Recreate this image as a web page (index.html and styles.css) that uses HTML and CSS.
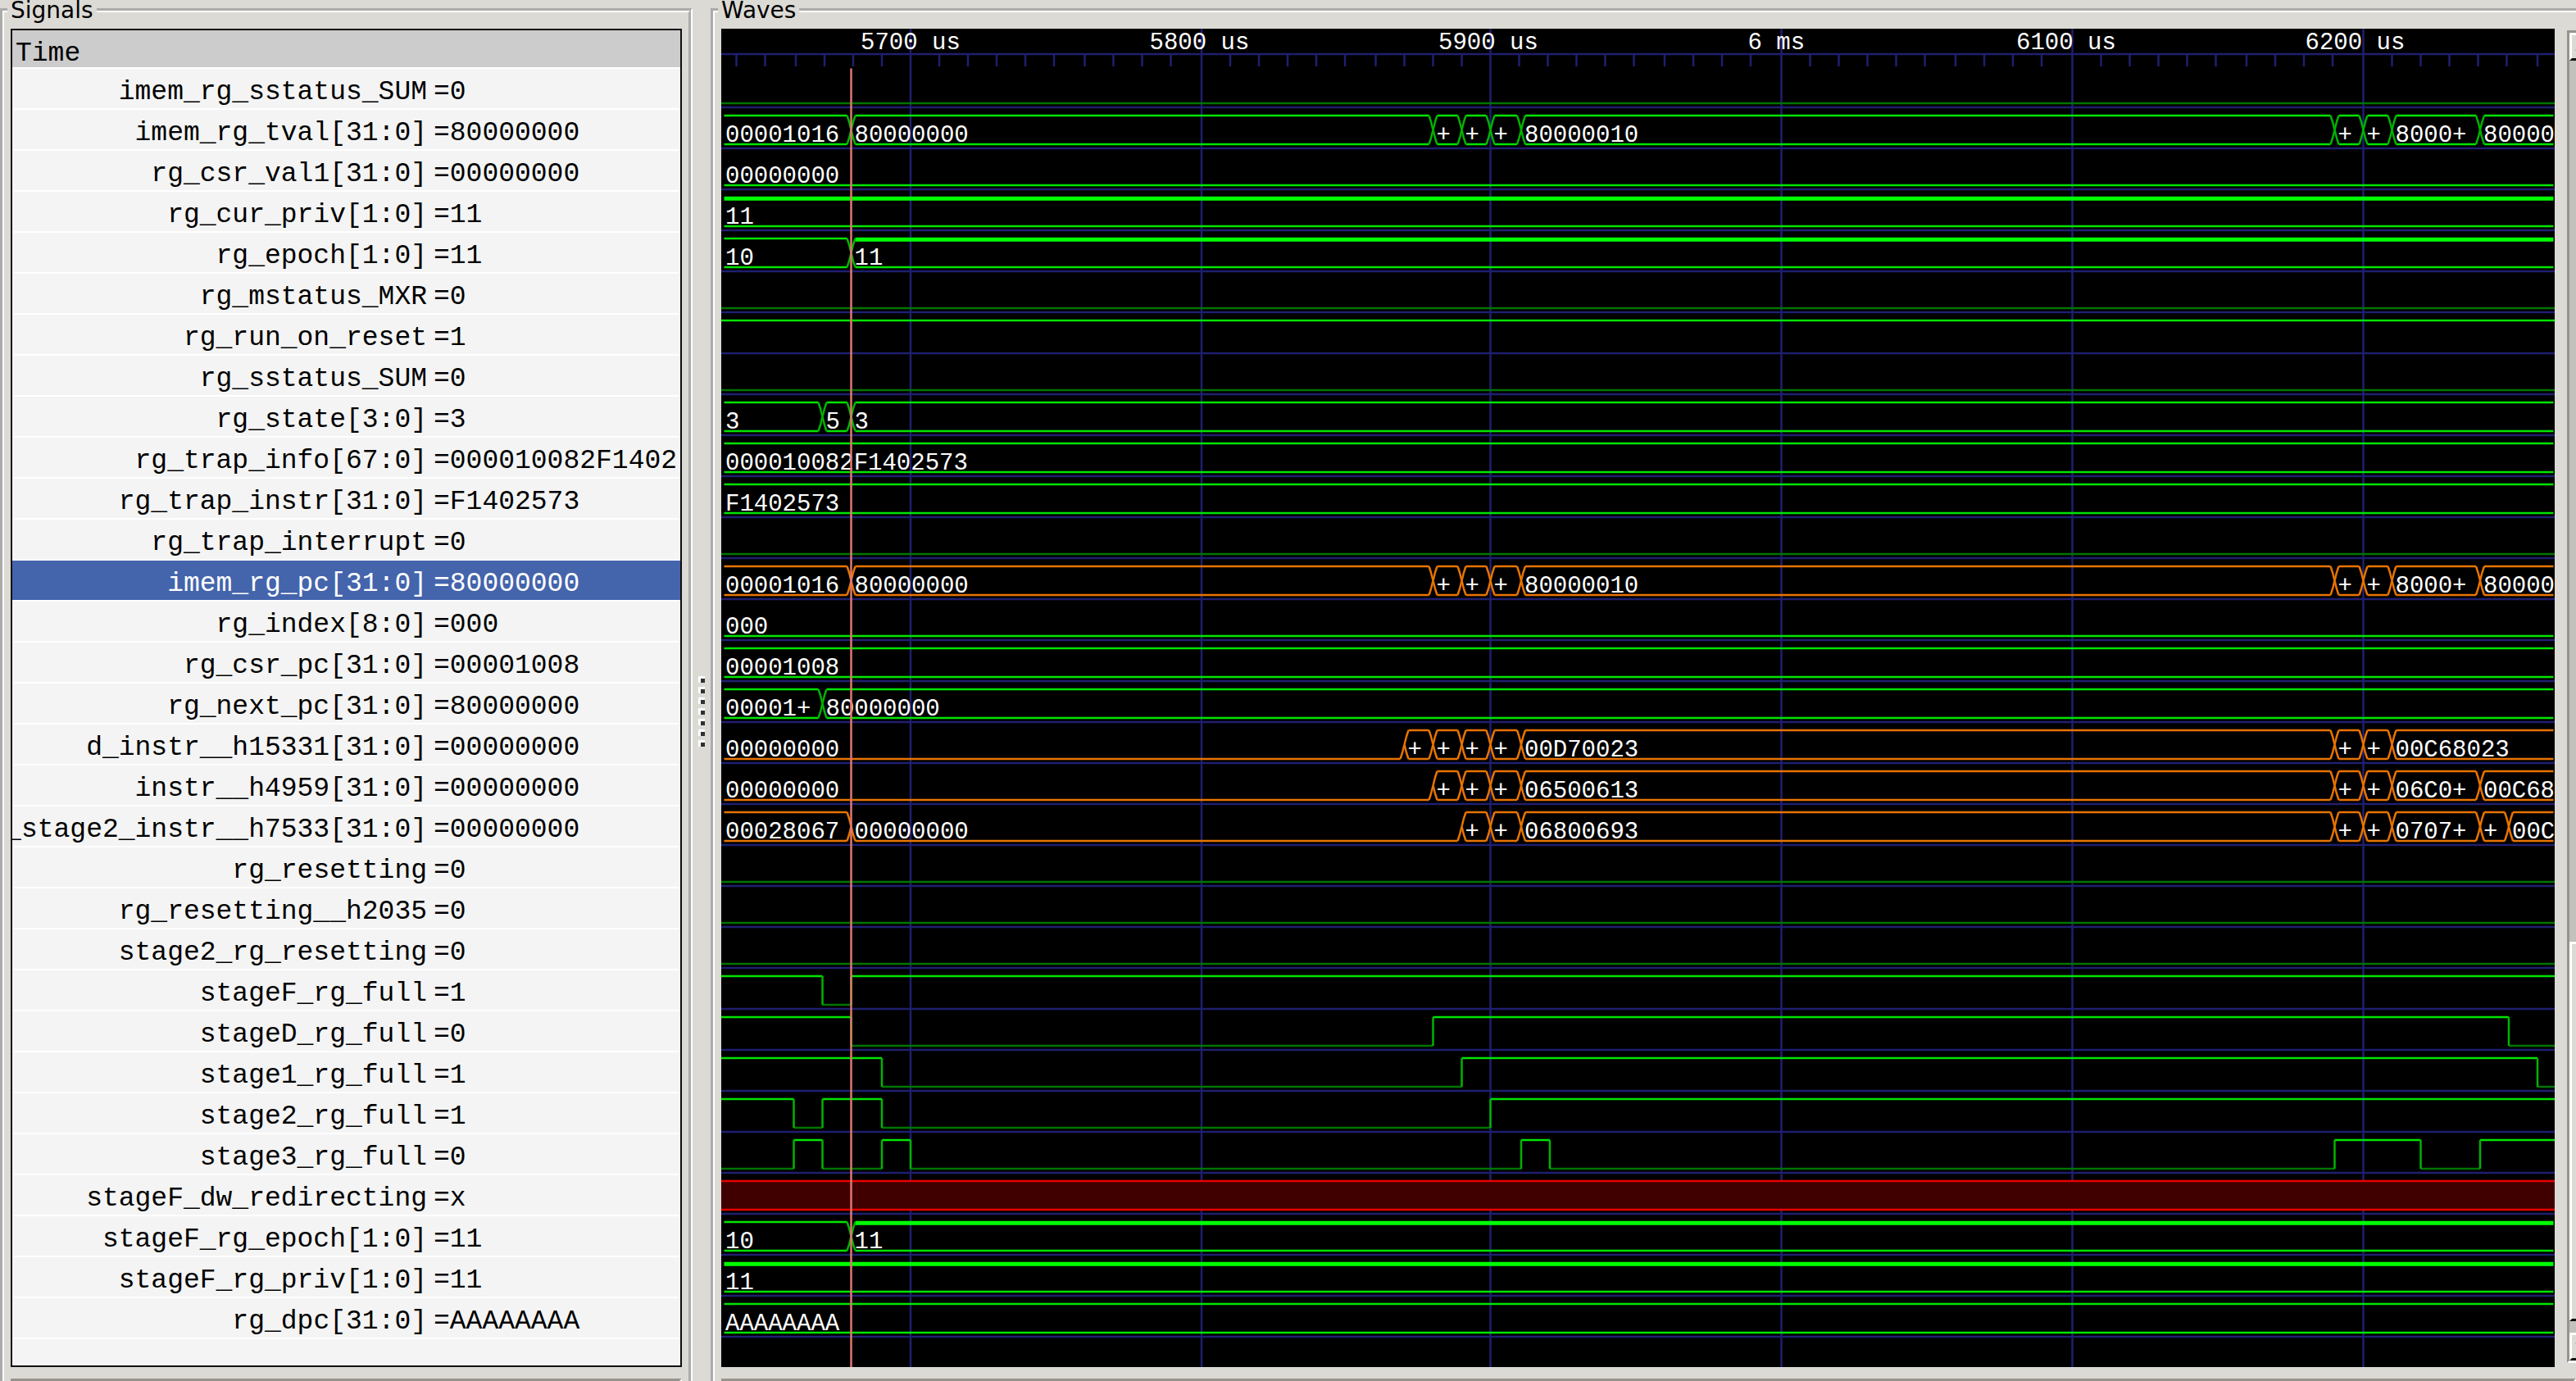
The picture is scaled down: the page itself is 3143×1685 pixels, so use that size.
FILE: index.html
```
<!DOCTYPE html>
<html lang="en">
<head>
    <meta charset="UTF-8">
    <meta name="viewport" content="width=device-width, initial-scale=1.0">
    <title>Signals and Waves</title>
    <link rel="stylesheet" href="styles.css">
</head>
<body>
    <main class="window">
        <fieldset class="panel signals">
            <legend>Signals</legend>
            <table class="signal-list">
                <thead>
                    <tr><th>Time</th></tr>
                </thead>
                <tbody id="signalRows"></tbody>
            </table>
            <div class="scrollbar horizontal">
                <button class="arrow" aria-label="Scroll signals left">
                    <svg viewBox="0 0 12 12"><path d="M8 2 L3 6 L8 10 Z"/></svg>
                </button>
                <div class="track"><div class="thumb"></div></div>
                <button class="arrow" aria-label="Scroll signals right">
                    <svg viewBox="0 0 12 12"><path d="M4 2 L9 6 L4 10 Z"/></svg>
                </button>
            </div>
        </fieldset>
        <div class="sash">
            <i></i><i></i><i></i><i></i><i></i><i></i><i></i>
        </div>
        <fieldset class="panel waves">
            <legend>Waves</legend>
            <div class="wave-area">
                <svg class="wave-canvas" id="waveCanvas"></svg>
                <div class="scrollbar vertical">
                    <button class="arrow" aria-label="Scroll up">
                        <svg viewBox="0 0 12 12"><path d="M2 8 L6 3 L10 8 Z"/></svg>
                    </button>
                    <div class="track"><div class="thumb"></div></div>
                    <button class="arrow" aria-label="Scroll down">
                        <svg viewBox="0 0 12 12"><path d="M2 4 L6 9 L10 4 Z"/></svg>
                    </button>
                </div>
            </div>
            <div class="scrollbar horizontal">
                <button class="arrow" aria-label="Scroll waves left">
                    <svg viewBox="0 0 12 12"><path d="M8 2 L3 6 L8 10 Z"/></svg>
                </button>
                <div class="track"></div>
            </div>
        </fieldset>
    </main>
    <script src="script.js"></script>
</body>
</html>
```
FILE: styles.css
```
* {
    box-sizing: border-box;
}
html,
body {
    height: 100%;
}
body {
    margin: 0;
    overflow: hidden;
    background-color: #dcdad5;
    color: #000000;
    font-family: "DejaVu Sans", sans-serif;
    font-size: 28px;
}
.window {
    display: flex;
}
.panel {
    margin: 0;
    padding: 10px 8px;
    border: 5px groove #ffffff;
    min-width: 0;
}
.panel legend {
    margin-left: -4px;
    padding: 0 4px;
    line-height: 25px;
}
.signals {
    flex: 0 0 845px;
}
.waves {
    flex: 1;
    padding-right: 0;
    border-right: none;
}

/* signal list */
.signal-list {
    display: block;
    height: 1633px;
    border: 2px solid #101010;
    background-color: #f4f4f4;
    overflow: hidden;
    font-family: "Liberation Mono", "Courier New", monospace;
    font-size: 33px;
    line-height: 40px;
}
.signal-list thead,
.signal-list tbody {
    display: block;
}
.signal-list tr {
    display: flex;
    gap: 8px;
    height: 50px;
    padding-top: 9px;
    border-bottom: 2px solid #ffffff;
    white-space: pre;
}
.signal-list thead tr {
    height: 47px;
    background-color: #cccccc;
}
.signal-list th {
    padding: 0 4px;
    font-weight: normal;
}
.signal-list td {
    padding: 0;
}
.signal-list .name {
    display: flex;
    flex: 0 0 506px;
    justify-content: flex-end;
    min-width: 0;
}
.signal-list .selected {
    background-color: #4464ac;
    color: #ffffff;
}

/* drag handle between the panels */
.sash {
    display: flex;
    flex: 0 0 22px;
    flex-direction: column;
    align-items: center;
    justify-content: center;
    gap: 5px;
}
.sash i {
    width: 8px;
    height: 8px;
    margin-right: 1px;
    border: 3px solid #ffffff;
    border-right: none;
    border-bottom: none;
    background-color: #303030;
}

/* waves */
.wave-area {
    display: flex;
    gap: 15px;
    height: 1633px;
}
.wave-canvas {
    flex: 1;
    min-width: 0;
    height: 100%;
    background-color: #000000;
}
.wave-canvas text {
    fill: #ffffff;
    font-family: "Liberation Mono", "Courier New", monospace;
    font-size: 29px;
}
.wave-canvas path {
    fill: none;
    stroke-width: 2.5;
}
.wave-canvas .grid {
    stroke: #1f1f70;
}
.wave-canvas .high {
    stroke: #00e400;
}
.wave-canvas .low {
    stroke: #007400;
}
.wave-canvas .edge {
    stroke: #00b400;
}
.wave-canvas .full {
    stroke: #00ff00;
    stroke-width: 5;
}
.wave-canvas .orange {
    stroke: #e87400;
}
.wave-canvas .unknown {
    fill: #400000;
    stroke: #e80000;
}
.wave-canvas .cursor {
    stroke: #e07870;
}

/* scrollbars */
.scrollbar {
    display: flex;
    border: 3px solid;
    border-color: #96948c #ffffff #ffffff #96948c;
    background-color: #c2c1bc;
}
.horizontal {
    height: 38px;
    margin-top: 14px;
}
.vertical {
    flex: 0 0 11px;
    flex-direction: column;
    margin: 2px 0 5px;
    border-right: none;
    overflow: hidden;
}
.arrow,
.thumb {
    border: 3px solid;
    border-color: #ffffff #101010 #101010 #ffffff;
    background-color: #dcdad5;
}
.arrow {
    flex: 0 0 34px;
    width: 34px;
    padding: 0;
}
.arrow svg {
    display: block;
    width: 26px;
    height: 26px;
}
.track {
    flex: 1;
    display: flex;
}
.horizontal .thumb {
    width: 520px;
    margin-left: 178px;
}
.vertical .track {
    flex-direction: column;
    justify-content: flex-end;
}
.vertical .thumb {
    width: 34px;
    height: 463px;
    margin-bottom: 14px;
}
```
FILE: script.js
```
// one wave unit is 2.5 px, a signal row is 20 units high
const U = 2.5;
const ROW = 20;

const pcWave = [[0, '00001016'], [63, '80000000'], [347, '+'], [361, '+'], [375, '+'], [390, '80000010'],
    [787, '+'], [801, '+'], [815, '8000+'], [858, '80000']];

// bit: start level and the places where it toggles
// bus: [start, text, kind], kind is 'zero' (bottom line only) or 'full' (thick top line)
const signals = [
    { name: 'imem_rg_sstatus_SUM', value: '0', bit: 0 },
    { name: 'imem_rg_tval[31:0]', value: '80000000', bus: pcWave },
    { name: 'rg_csr_val1[31:0]', value: '00000000', bus: [[0, '00000000', 'zero']] },
    { name: 'rg_cur_priv[1:0]', value: '11', bus: [[0, '11', 'full']] },
    { name: 'rg_epoch[1:0]', value: '11', bus: [[0, '10'], [63, '11', 'full']] },
    { name: 'rg_mstatus_MXR', value: '0', bit: 0 },
    { name: 'rg_run_on_reset', value: '1', bit: 1 },
    { name: 'rg_sstatus_SUM', value: '0', bit: 0 },
    { name: 'rg_state[3:0]', value: '3', bus: [[0, '3'], [49, '5'], [63, '3']] },
    { name: 'rg_trap_info[67:0]', value: '000010082F1402', bus: [[0, '000010082F1402573']] },
    { name: 'rg_trap_instr[31:0]', value: 'F1402573', bus: [[0, 'F1402573']] },
    { name: 'rg_trap_interrupt', value: '0', bit: 0 },
    { name: 'imem_rg_pc[31:0]', value: '80000000', bus: pcWave, color: 'orange', selected: true },
    { name: 'rg_index[8:0]', value: '000', bus: [[0, '000', 'zero']] },
    { name: 'rg_csr_pc[31:0]', value: '00001008', bus: [[0, '00001008']] },
    { name: 'rg_next_pc[31:0]', value: '80000000', bus: [[0, '00001+'], [49, '80000000']] },
    { name: 'd_instr__h15331[31:0]', value: '00000000', color: 'orange',
      bus: [[0, '00000000', 'zero'], [333, '+'], [347, '+'], [361, '+'], [375, '+'], [390, '00D70023'],
            [787, '+'], [801, '+'], [815, '00C68023']] },
    { name: 'instr__h4959[31:0]', value: '00000000', color: 'orange',
      bus: [[0, '00000000', 'zero'], [347, '+'], [361, '+'], [375, '+'], [390, '06500613'],
            [787, '+'], [801, '+'], [815, '06C0+'], [858, '00C68']] },
    { name: '_stage2_instr__h7533[31:0]', value: '00000000', color: 'orange',
      bus: [[0, '00028067'], [63, '00000000', 'zero'], [361, '+'], [375, '+'], [390, '06800693'],
            [787, '+'], [801, '+'], [815, '0707+'], [858, '+'], [872, '00C']] },
    { name: 'rg_resetting', value: '0', bit: 0 },
    { name: 'rg_resetting__h2035', value: '0', bit: 0 },
    { name: 'stage2_rg_resetting', value: '0', bit: 0 },
    { name: 'stageF_rg_full', value: '1', bit: 1, toggles: [49, 63] },
    { name: 'stageD_rg_full', value: '0', bit: 1, toggles: [63, 347, 872] },
    { name: 'stage1_rg_full', value: '1', bit: 1, toggles: [78, 361, 886] },
    { name: 'stage2_rg_full', value: '1', bit: 1, toggles: [35, 49, 78, 375] },
    { name: 'stage3_rg_full', value: '0', bit: 0, toggles: [35, 49, 78, 92, 390, 404, 787, 829, 858] },
    { name: 'stageF_dw_redirecting', value: 'x', unknown: true },
    { name: 'stageF_rg_epoch[1:0]', value: '11', bus: [[0, '10'], [63, '11', 'full']] },
    { name: 'stageF_rg_priv[1:0]', value: '11', bus: [[0, '11', 'full']] },
    { name: 'rg_dpc[31:0]', value: 'AAAAAAAA', bus: [[0, 'AAAAAAAA']] }
];

// [grid line, label start, label]
const times = [
    [-49, -92, ''],
    [92, 68, '5700 us'],
    [234, 209, '5800 us'],
    [375, 350, '5900 us'],
    [517, 501, '6 ms'],
    [659, 632, '6100 us'],
    [801, 773, '6200 us']
];
const tickSteps = [14, 28, 42, 56, 70, 85, 99, 113, 127];
const cursorAt = 63;

const canvas = document.getElementById('waveCanvas');

function px(n) {
    return n * U + 1;
}

function line(cls, ...points) {
    const d = points.map(([x, y], i) => (i ? 'L' : 'M') + px(x) + ' ' + px(y)).join(' ');
    return `<path class="${cls}" d="${d}"/>`;
}

function label(x, y, text) {
    return text ? `<text x="${x * U}" y="${y * U}">${text}</text>` : '';
}

function drawBit(s, top, low, end) {
    let level = s.bit;
    let from = -1;
    let lines = '';
    let edges = '';
    for (const x of [...(s.toggles || []), end]) {
        const y = level ? top : low;
        lines += line(level ? 'high' : 'low', [from, y], [x, y]);
        if (x !== end) {
            edges += line('edge', [x, top], [x, low]);
        }
        level = 1 - level;
        from = x;
    }
    return lines + edges;
}

function drawBus(s, top, low, end) {
    const mid = (top + low) / 2;
    const main = s.color || 'high';
    const edge = s.color || 'edge';
    let out = '';
    s.bus.forEach(([x, text, kind], i) => {
        const next = s.bus[i + 1];
        const from = i ? x + 2 : 1;
        const to = next ? next[0] - 2 : end - 1;
        out += line(main, [from, low], [to, low]);
        if (kind === 'full') {
            out += line('full', [from, top + 0.5], [to, top + 0.5]);
        } else if (kind !== 'zero') {
            out += line(main, [from, top], [to, top]);
        }
        if (i) {
            // right half of the crossing
            if (kind !== 'zero') {
                out += line(edge, [x, mid], [x + 1, top + 3], [x + 2, top]);
            }
            out += line(edge, [x, mid], [x + 1, low - 3], [x + 2, low]);
        }
        if (next) {
            // left half of the next crossing
            if (kind !== 'zero') {
                out += line(edge, [to, top], [to + 1, top + 3], [to + 2, mid]);
            }
            out += line(edge, [to, low], [to + 1, low - 3], [to + 2, mid]);
        }
        out += label(x + 2, low - 1, text);
    });
    return out;
}

function drawWaves() {
    const end = canvas.clientWidth / U;
    const bottom = canvas.clientHeight / U;
    let out = line('grid', [-1, 12], [end, 12]);

    for (const [x] of times) {
        out += line('grid', [x, -1], [x, bottom]);
        for (const step of tickSteps) {
            out += line('grid', [x + step, 12], [x + step, 18]);
        }
    }
    signals.forEach((s, i) => {
        const y = 38 + i * ROW;
        out += line('grid', [-1, y], [end, y]);
    });
    signals.forEach((s, i) => {
        const top = 22 + i * ROW;
        const low = 36 + i * ROW;
        if (s.unknown) {
            out += line('unknown', [-2, top], [end + 1, top], [end + 1, low], [-2, low]);
        } else if (s.bus) {
            out += drawBus(s, top, low, end);
        } else {
            out += drawBit(s, top, low, end);
        }
    });
    for (const [, x, text] of times) {
        out += label(x, 10, text);
    }
    out += line('cursor', [cursorAt, 19], [cursorAt, bottom]);
    canvas.innerHTML = out;
}

function fillSignalRows() {
    const rows = document.getElementById('signalRows');
    rows.innerHTML = signals.map(s => `
        <tr class="${s.selected ? 'selected' : ''}"><td class="name">${s.name}</td><td>=${s.value}</td></tr>`).join('');
}

fillSignalRows();
drawWaves();
window.addEventListener('resize', drawWaves);
```
